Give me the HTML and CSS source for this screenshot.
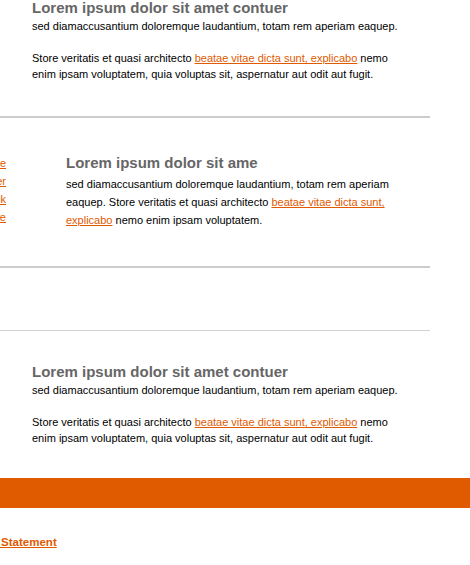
FILE: index.html
```html
<!DOCTYPE html>
<html>
<head>
<meta charset="utf-8">
<link rel="stylesheet" href="styles.css">
</head>
<body>
<div class="page">
  <div class="main">
    <section class="article first">
      <h2 class="title">Lorem ipsum dolor sit amet contuer</h2>
      <p class="text">sed diamaccusantium doloremque laudantium, totam rem aperiam eaquep.</p>
      <p class="text">Store veritatis et quasi architecto <a href="#">beatae vitae dicta sunt, explicabo</a> nemo enim ipsam voluptatem, quia voluptas sit, aspernatur aut odit aut fugit.</p>
    </section>
    <hr class="rule thick">
    <section class="feature">
      <nav class="side">
        <a href="#">Home</a>
        <a href="#">Partner</a>
        <a href="#">Feedback</a>
        <a href="#">Archive</a>
      </nav>
      <div class="feature-body">
        <h2 class="title">Lorem ipsum dolor sit ame</h2>
        <p class="text loose">sed diamaccusantium doloremque laudantium, totam rem aperiam eaquep. Store veritatis et quasi architecto <a href="#">beatae vitae dicta sunt, explicabo</a> nemo enim ipsam voluptatem.</p>
      </div>
    </section>
    <hr class="rule thick">
    <div class="spacer"></div>
    <hr class="rule thin">
    <section class="article last">
      <h2 class="title">Lorem ipsum dolor sit amet contuer</h2>
      <p class="text">sed diamaccusantium doloremque laudantium, totam rem aperiam eaquep.</p>
      <p class="text">Store veritatis et quasi architecto <a href="#">beatae vitae dicta sunt, explicabo</a> nemo enim ipsam voluptatem, quia voluptas sit, aspernatur aut odit aut fugit.</p>
    </section>
  </div>
  <div class="bar"></div>
  <div class="footer">
    <a href="#" class="footer-link">Privacy Statement</a>
  </div>
</div>
</body>
</html>
```

FILE: styles.css
```css
html, body {
  margin: 0;
  padding: 0;
  background: #fff;
  overflow: hidden;
}
body {
  font-family: "Liberation Sans", Arial, sans-serif;
  font-size: 11px;
  color: #000;
}
a {
  color: #e05a00;
  text-decoration: underline;
}
.page {
  width: 470px;
}
.main {
  width: 430px;
}
.article {
  padding-left: 32px;
  padding-right: 30px;
}
.article.first {
  margin-top: -2px;
  padding-bottom: 34px;
}
.article.last {
  padding-top: 31px;
  padding-bottom: 32px;
}
.title {
  margin: 0;
  font-size: 15px;
  line-height: 20px;
  font-weight: bold;
  color: #666;
}
.text {
  margin: 0 0 16px 0;
  line-height: 16px;
}
.text:last-child {
  margin-bottom: 0;
}
.text.loose {
  line-height: 18px;
}
.rule {
  margin: 0;
  border: 0;
  height: 0;
}
.rule.thick {
  border-top: 2px solid #cccccc;
}
.rule.thin {
  border-top: 1px solid #d3d3d3;
}
.feature {
  display: flex;
  padding-bottom: 37px;
}
.side {
  width: 100px;
  margin-left: -94px;
  padding-top: 36px;
  display: flex;
  flex-direction: column;
  align-items: flex-end;
  line-height: 18px;
  white-space: nowrap;
}
.feature-body {
  margin-left: 60px;
  width: 326px;
  padding-top: 33px;
}
.feature-body .title {
  line-height: 24px;
}
.spacer {
  height: 62px;
}
.bar {
  height: 30px;
  background: #e05a00;
}
.footer {
  margin-left: -43px;
  padding-top: 26px;
  line-height: 16px;
}
.footer-link {
  font-weight: bold;
  font-size: 11.5px;
}
```
